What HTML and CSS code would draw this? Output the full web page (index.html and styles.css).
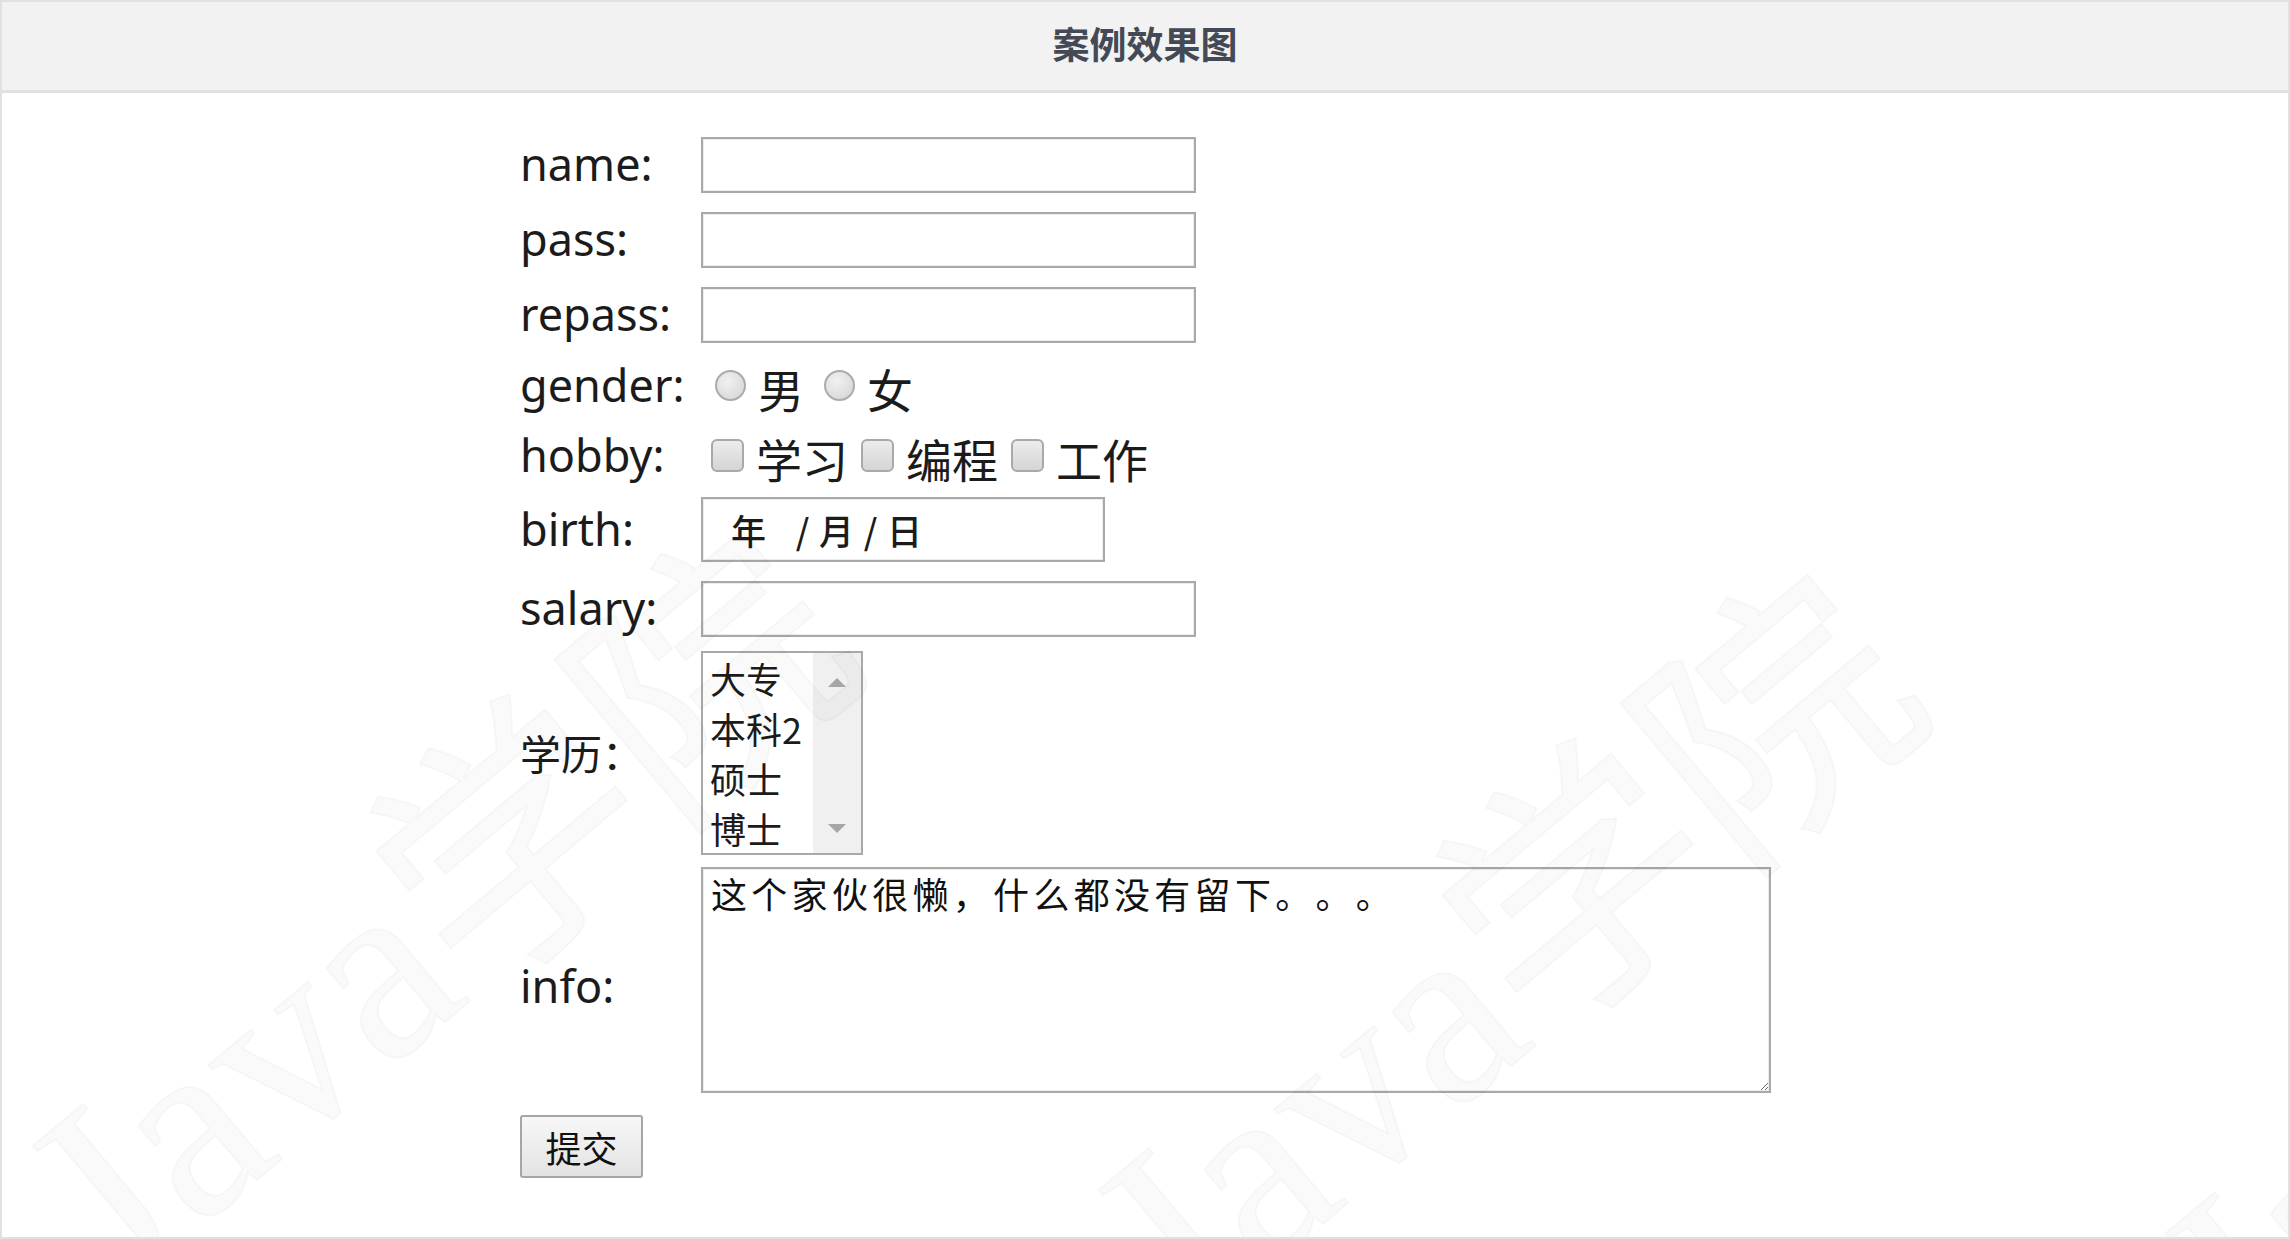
FILE: index.html
```html
<!DOCTYPE html>
<html lang="zh-CN">
<head>
<meta charset="utf-8">
<title>案例效果图</title>
<link rel="stylesheet" href="styles.css">
</head>
<body>
<div class="frame">
  <div class="header"><span class="title">案例效果图</span></div>
  <form class="form" onsubmit="return false">
    <label class="lbl">name:</label>
    <div class="fld"><input class="txt" type="text"></div>

    <label class="lbl">pass:</label>
    <div class="fld"><input class="txt" type="password"></div>

    <label class="lbl">repass:</label>
    <div class="fld"><input class="txt" type="password"></div>

    <label class="lbl">gender:</label>
    <div class="fld choices gender">
      <input class="radio" type="radio" name="g"><span class="opt">男</span>
      <input class="radio" type="radio" name="g"><span class="opt">女</span>
    </div>

    <label class="lbl">hobby:</label>
    <div class="fld choices hobby">
      <input class="check" type="checkbox"><span class="opt">学习</span>
      <input class="check" type="checkbox"><span class="opt">编程</span>
      <input class="check" type="checkbox"><span class="opt">工作</span>
    </div>

    <label class="lbl">birth:</label>
    <div class="fld">
      <div class="datebox"><span class="dpart y">年</span><span class="dsep">/</span><span class="dpart">月</span><span class="dsep">/</span><span class="dpart">日</span></div>
    </div>

    <label class="lbl">salary:</label>
    <div class="fld"><input class="txt" type="text"></div>

    <label class="lbl cjk">学历：</label>
    <div class="fld">
      <div class="listbox">
        <div class="opts">
          <div class="lopt">大专</div>
          <div class="lopt">本科2</div>
          <div class="lopt">硕士</div>
          <div class="lopt">博士</div>
        </div>
        <div class="sbar"><span class="arr up"></span><span class="arr down"></span></div>
      </div>
    </div>

    <label class="lbl info">info:</label>
    <div class="fld"><textarea class="area">这个家伙很懒，什么都没有留下。。。</textarea></div>

    <div class="submitrow"><button class="btn" type="button">提交</button></div>
  </form>

  <div class="wm wm1">Java学院</div>
  <div class="wm wm2">Java学院</div>
  <div class="wm wm3">Java学院</div>
</div>
</body>
</html>
```

FILE: styles.css
```css
html, body {
  margin: 0;
  padding: 0;
  background: #ffffff;
}

.frame {
  position: relative;
  box-sizing: border-box;
  width: 2290px;
  height: 1239px;
  border: 2px solid #e1e1e1;
  background: #ffffff;
  overflow: hidden;
  font-family: "Noto Sans", "Noto Sans CJK SC", sans-serif;
  color: #1b1b1b;
}

.header {
  height: 88px;
  background: #f2f2f2;
  border-bottom: 3px solid #e2e2e2;
  display: flex;
  align-items: center;
  justify-content: center;
}

.title {
  font-family: "Noto Sans CJK SC", sans-serif;
  font-weight: 700;
  font-size: 37px;
  color: #434a56;
  position: relative;
  top: -3px;
}

.form {
  display: grid;
  grid-template-columns: 181px auto;
  grid-template-rows: 75px 75px 75px 67px 73px 75px 83px 205px 249px 85px;
  margin: 0 0 0 518px;
  padding-top: 34px;
  align-items: center;
}

.lbl {
  font-size: 45px;
  line-height: 1.3;
  color: #1b1b1b;
}

.lbl.cjk {
  font-family: "Noto Sans CJK SC", sans-serif;
  font-size: 41px;
}

.lbl.info {
  position: relative;
  top: 7px;
}

.fld {
  display: flex;
  align-items: center;
}

.txt {
  box-sizing: border-box;
  width: 495px;
  height: 56px;
  margin: 0;
  border: 2px solid #a9a9a9;
  box-shadow: inset 0 0 0 1px #ececec;
  background: #fff;
  font-size: 30px;
  padding: 0 8px;
  outline: none;
}

.choices .opt {
  font-family: "Noto Sans CJK SC", sans-serif;
  font-size: 46px;
  line-height: 1.2;
  color: #1b1b1b;
  position: relative;
  top: 3px;
}

.radio {
  -webkit-appearance: none;
  appearance: none;
  box-sizing: border-box;
  width: 31px;
  height: 31px;
  margin: 0;
  border-radius: 50%;
  border: 2px solid #ababab;
  background: radial-gradient(circle at 40% 35%, #f1f1f1 0%, #dcdcdc 70%, #cfcfcf 100%);
}

.gender .radio { margin-left: 20px; margin-right: 12px; }
.gender .radio:first-child { margin-left: 14px; }

.check {
  -webkit-appearance: none;
  appearance: none;
  box-sizing: border-box;
  width: 33px;
  height: 33px;
  margin: 0;
  border-radius: 6px;
  border: 2px solid #a9a9a9;
  background: linear-gradient(#ececec, #d5d5d5);
}

.hobby .check { margin-left: 13px; margin-right: 12px; }
.hobby .check:first-child { margin-left: 10px; }

.datebox {
  box-sizing: border-box;
  width: 404px;
  height: 65px;
  border: 2px solid #a9a9a9;
  box-shadow: inset 0 0 0 1px #ececec;
  background: #fff;
  display: flex;
  align-items: center;
  padding-left: 28px;
  font-family: "Noto Sans CJK SC", sans-serif;
  font-size: 35px;
  font-weight: 500;
  color: #1b1b1b;
}

.dpart { width: 35px; text-align: center; }
.dpart.y { margin-right: 20px; }
.dsep { width: 33px; text-align: center; }

.listbox {
  box-sizing: border-box;
  width: 162px;
  height: 204px;
  border: 2px solid #a9a9a9;
  background: #fff;
  display: flex;
}

.opts {
  flex: 1;
  padding: 0 0 0 7px;
}

.lopt {
  font-family: "Noto Sans CJK SC", sans-serif;
  font-size: 36px;
  line-height: 50px;
  height: 50px;
  color: #1b1b1b;
  white-space: nowrap;
}

.sbar {
  width: 48px;
  background: #f0f0f0;
  display: flex;
  flex-direction: column;
  align-items: center;
  justify-content: space-between;
  padding: 25px 0 20px;
  box-sizing: border-box;
}

.arr {
  width: 0;
  height: 0;
  border-left: 9px solid transparent;
  border-right: 9px solid transparent;
}

.arr.up { border-bottom: 9px solid #a6a6a6; }
.arr.down { border-top: 9px solid #a6a6a6; }

.area {
  box-sizing: border-box;
  width: 1070px;
  height: 226px;
  margin: 0;
  border: 2px solid #a9a9a9;
  box-shadow: inset 0 0 0 1px #ececec;
  padding: 3px 8px;
  font-family: "Noto Sans CJK SC", sans-serif;
  font-size: 36px;
  letter-spacing: 4.3px;
  line-height: 1.2;
  color: #111;
  outline: none;
  text-spacing-trim: space-all;
  font-kerning: none;
  font-feature-settings: "halt" 0, "chws" 0, "palt" 0;
}

.submitrow {
  grid-column: 1 / -1;
  display: flex;
  align-items: center;
}

.btn {
  box-sizing: border-box;
  width: 123px;
  height: 63px;
  margin: 0;
  border: 2px solid #a6a6a6;
  border-radius: 3px;
  background: linear-gradient(#f7f7f7, #e3e3e3);
  font-family: "Noto Sans CJK SC", sans-serif;
  font-size: 36px;
  color: #111;
  padding: 0;
}

.wm {
  position: absolute;
  left: 0;
  top: 0;
  font-family: "Liberation Serif", "Noto Sans CJK SC", serif;
  font-size: 260px;
  line-height: 1;
  white-space: nowrap;
  color: rgba(0, 0, 0, 0.018);
  -webkit-text-stroke: 2px rgba(0, 0, 0, 0.028);
  transform-origin: 0 100%;
  pointer-events: none;
}

.wm1 { transform: translate(144px, 1066px) rotate(-40deg); }
.wm2 { transform: translate(1210px, 1110px) rotate(-40deg); }
.wm3 { transform: translate(2276px, 1154px) rotate(-40deg); }
```
